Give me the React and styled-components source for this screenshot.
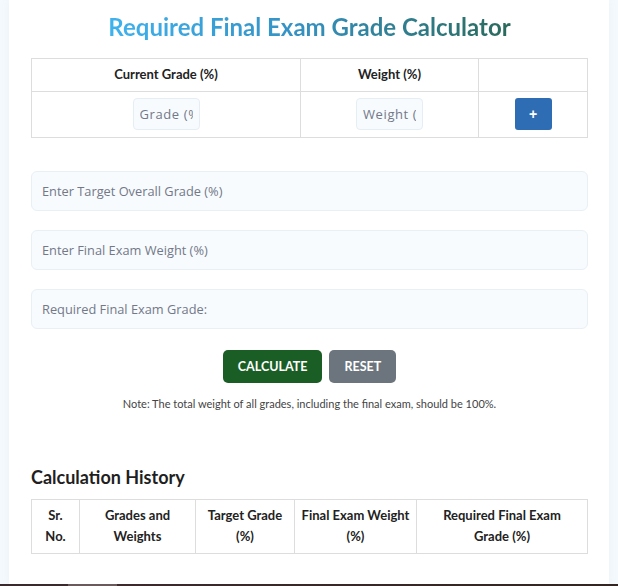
import React from 'react';
import styled, { createGlobalStyle } from 'styled-components';

const GlobalStyle = createGlobalStyle`
  html, body {
    margin: 0;
    padding: 0;
    background: #f4f9fd;
  }
  * {
    box-sizing: border-box;
  }
`;

const Page = styled.div`
  display: flex;
  flex-direction: column;
  min-height: 586px;
`;

const Container = styled.div`
  width: 600px;
  margin: 0 auto;
  background: #ffffff;
  box-shadow: 0 0 8px rgba(120, 150, 170, 0.08);
  padding: 12px 21px 30px 22px;
  font-family: Lato, "Liberation Sans", sans-serif;
  color: #222;
`;

const TitleRow = styled.div`
  text-align: center;
`;

const Title = styled.h1`
  display: inline-block;
  margin: 0;
  font-size: 24px;
  line-height: 30px;
  font-weight: 700;
  background: linear-gradient(90deg, #3fb2ee 0%, #3593c6 45%, #2a6a5b 100%);
  -webkit-background-clip: text;
  background-clip: text;
  color: transparent;
`;

const Table = styled.table`
  width: 100%;
  border-collapse: collapse;
  margin-top: ${(p) => p.$top || 0}px;
  table-layout: fixed;
`;

const Th = styled.th`
  border: 1px solid #dddddd;
  font-size: 13px;
  font-weight: 700;
  line-height: ${(p) => (p.$tall ? 21 : 17)}px;
  padding: ${(p) => (p.$tall ? '5px 4px 6px' : '7px 4px 8px')};
  text-align: center;
  color: #222;
  width: ${(p) => p.$w}px;
`;

const Td = styled.td`
  border: 1px solid #dddddd;
  padding: 6px 4px 7px;
  text-align: center;
  vertical-align: middle;
`;

const SmallInput = styled.input`
  width: 67px;
  height: 32px;
  padding: 0 6px;
  border: 1px solid #e6eef5;
  border-radius: 4px;
  background: #f7fbfe;
  font-family: "Open Sans", "Liberation Sans", sans-serif;
  font-size: 13px;
  letter-spacing: 0.6px;
  color: #333;
  outline: none;
  &::placeholder {
    color: #737888;
  }
`;

const AddButton = styled.button`
  width: 37px;
  height: 32px;
  border: none;
  border-radius: 3px;
  background: #2e6db3;
  color: #fff;
  font-size: 14px;
  font-weight: 700;
  font-family: "Liberation Sans", sans-serif;
  cursor: pointer;
`;

const Fields = styled.div`
  display: flex;
  flex-direction: column;
  gap: 19px;
  margin-top: 33px;
`;

const Field = styled.input`
  width: 100%;
  height: 40px;
  padding: 0 10px;
  border: 1px solid #e8f0f6;
  border-radius: 6px;
  background: #f7fbfe;
  font-family: "Open Sans", "Liberation Sans", sans-serif;
  font-size: 12.8px;
  color: #333;
  outline: none;
  &::placeholder {
    color: #737888;
  }
`;

const Result = styled.div`
  height: 40px;
  display: flex;
  align-items: center;
  padding: 0 10px;
  border: 1px solid #e8f0f6;
  border-radius: 6px;
  background: #f7fbfe;
  font-family: "Open Sans", "Liberation Sans", sans-serif;
  font-size: 12.8px;
  color: #737888;
`;

const Actions = styled.div`
  display: flex;
  justify-content: center;
  gap: 7px;
  margin-top: 21px;
`;

const ActionButton = styled.button`
  height: 33px;
  padding: 0 15px;
  border: none;
  border-radius: 5px;
  background: ${(p) => p.$bg};
  color: #fff;
  font-family: Lato, "Liberation Sans", sans-serif;
  font-size: 12.5px;
  font-weight: 700;
  cursor: pointer;
`;

const Note = styled.p`
  margin: 14px 0 0;
  text-align: center;
  font-size: 11px;
  line-height: 13px;
  color: #444;
`;

const HistoryTitle = styled.h2`
  margin: 54px 0 0;
  font-size: 18px;
  line-height: 26px;
  font-weight: 700;
  color: #1f1f1f;
`;

const Footer = styled.div`
  height: 3px;
  margin-top: auto;
  background: linear-gradient(90deg, #3a2a2e 0%, #3a2a2e 11%, #6b5a5c 11%, #6b5a5c 19%, #3c2a2c 19%, #332622 100%);
`;

export default function App() {
  return (
    <Page>
      <GlobalStyle />
      <Container>
        <TitleRow>
          <Title>Required Final Exam Grade Calculator</Title>
        </TitleRow>

        <Table $top={16}>
          <thead>
            <tr>
              <Th $w={269}>Current Grade (%)</Th>
              <Th $w={178}>Weight (%)</Th>
              <Th></Th>
            </tr>
          </thead>
          <tbody>
            <tr>
              <Td><SmallInput placeholder="Grade (%)" /></Td>
              <Td><SmallInput placeholder="Weight (%)" /></Td>
              <Td><AddButton>+</AddButton></Td>
            </tr>
          </tbody>
        </Table>

        <Fields>
          <Field placeholder="Enter Target Overall Grade (%)" />
          <Field placeholder="Enter Final Exam Weight (%)" />
          <Result>Required Final Exam Grade:</Result>
        </Fields>

        <Actions>
          <ActionButton $bg="#1b5e25">CALCULATE</ActionButton>
          <ActionButton $bg="#6c757d">RESET</ActionButton>
        </Actions>

        <Note>Note: The total weight of all grades, including the final exam, should be 100%.</Note>

        <HistoryTitle>Calculation History</HistoryTitle>

        <Table $top={9}>
          <thead>
            <tr>
              <Th $tall $w={48}>Sr.<br />No.</Th>
              <Th $tall $w={116}>Grades and<br />Weights</Th>
              <Th $tall $w={99}>Target Grade<br />(%)</Th>
              <Th $tall $w={122}>Final Exam Weight<br />(%)</Th>
              <Th $tall>Required Final Exam<br />Grade (%)</Th>
            </tr>
          </thead>
        </Table>
      </Container>
      <Footer />
    </Page>
  );
}
